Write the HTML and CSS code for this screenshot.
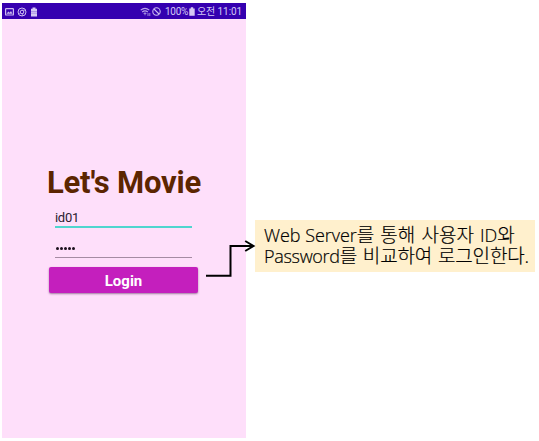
FILE: index.html
```html
<!DOCTYPE html>
<html lang="ko">
<head>
<meta charset="utf-8">
<title>Let's Movie</title>
<link rel="stylesheet" href="styles.css">
</head>
<body>
<main class="board">
  <section class="phone">
    <header class="status">
      <div class="status-left">
        <svg width="9" height="8" viewBox="0 0 9 8"><rect x=".6" y=".6" width="7.8" height="6.4" rx=".6" fill="none" stroke="#cbbcf0" stroke-width="1.2"/><path d="M1.5 5.8 3.4 3.6 4.6 4.8 6 3 7.5 5.8Z" fill="#cbbcf0"/></svg>
        <svg width="10" height="10" viewBox="0 0 10 10" fill="none" stroke="#cbbcf0"><circle cx="5" cy="5" r="4" stroke-width="1"/><circle cx="5" cy="5" r="1.8" stroke-width="1"/><path d="M5 3.2H8.3M3.5 6 1.8 7.2M6 6.5 5 9" stroke-width=".7"/></svg>
        <svg width="8" height="10" viewBox="0 0 8 10"><path d="M2.5.5h3v1.2H7v7.8H1V1.700h1.500z" fill="#d5c9f3"/><path d="M1 4.500h6M1 6.200h6" stroke="#9a80dc" stroke-width=".7"/></svg>
      </div>
      <div class="status-right">
        <svg width="11" height="10" viewBox="0 0 11 10" fill="none" stroke="#b9a5ea"><path d="M.7 3.200Q5-.5 9.300 3.200M2.200 5Q5 2.700 7.800 5M3.700 6.600Q5 5.500 6.300 6.600" stroke-width="1.100"/><path d="M5 8.300V6.500M8 6v3M9.800 6v3" stroke-width=".8"/></svg>
        <svg width="9" height="9" viewBox="0 0 9 9" fill="none" stroke="#cbbcf0" stroke-width="1.100"><circle cx="4.500" cy="4.500" r="3.700"/><path d="m2 2 5 5"/></svg>
        <span class="percent">100%</span>
        <svg width="6" height="9" viewBox="0 0 6 9"><path d="M1.800.3h2.400v1.100H5.700v7.300H.3V1.400h1.500z" fill="#d5c9f3"/></svg>
        <span class="clock">오전 11:01</span>
      </div>
    </header>
    <div class="login">
      <h1 class="title">Let's Movie</h1>
      <div class="field field-id">id01</div>
      <div class="field field-password"><i></i><i></i><i></i><i></i><i></i></div>
      <button class="submit" type="button">Login</button>
    </div>
  </section>
  <aside class="note">
    <div class="line line-one">Web Server<span>를 통해 사용자 </span>ID<span>와</span></div>
    <div class="line line-two">Password<span>를 비교하여 로그인한다.</span></div>
  </aside>
  <svg class="connector" width="56" height="42" viewBox="0 0 56 42" fill="none" stroke="#000" stroke-width="2"><path d="M6 40.700H30.500V11H53"/><path d="M45.200 6 53.500 11 45.200 16"/></svg>
</main>
</body>
</html>
```
FILE: styles.css
```css
* { box-sizing: border-box; }
body { margin: 0; background: #fff; }
.board {
  position: relative;
  display: flex;
  align-items: flex-start;
  gap: 9px;
  width: 539px;
  height: 441px;
  padding: 3px 0 0 2px;
  overflow: hidden;
}
.phone {
  width: 244px;
  height: 435px;
  background: #fedffa;
  font-family: Roboto, "Noto Sans CJK KR", sans-serif;
}
.status {
  display: flex;
  justify-content: space-between;
  align-items: center;
  height: 16px;
  padding: 1px 4px 0 3px;
  background: #3500b0;
  color: #d3c8f4;
  font-size: 10px;
  line-height: 15px;
}
.status-left, .status-right { display: flex; align-items: center; }
.status-left { gap: 3px; }
.status-right { gap: 1px; }
.status svg { display: block; }
.percent { margin: 0 0 0 3px; letter-spacing: -.3px; }
.clock { margin-left: 1px; white-space: nowrap; letter-spacing: -.1px; }
.login { padding: 144px 48px 0 47px; }
.title {
  margin: 0 -10px 0 -2px;
  height: 40px;
  color: #5c2500;
  font-size: 31px;
  font-weight: 700;
  letter-spacing: -.2px;
  line-height: 40px;
  white-space: nowrap;
}
.field {
  width: 137px;
  margin-left: 6px;
  color: #2b2030;
  font-size: 13px;
}
.field-id {
  height: 25px;
  padding-top: 6px;
  border-bottom: 2px solid #4fd5ce;
  letter-spacing: -.3px;
  line-height: 17px;
}
.field-password {
  display: flex;
  align-items: flex-start;
  gap: 1px;
  height: 30px;
  padding: 19px 0 0 1px;
  border-bottom: 1px solid #a58ba3;
}
.field-password i { width: 3px; height: 3px; border-radius: 50%; background: #1b101c; }
.submit {
  display: block;
  width: 149px;
  height: 26px;
  margin: 9px 0 0;
  padding: 2px 0 0;
  border: 0;
  border-radius: 2px;
  background: #c41fbd;
  box-shadow: 0 1px 2px rgba(70, 20, 70, .5);
  color: #fff;
  font: 700 15px/24px Roboto, sans-serif;
}
.note {
  width: 280px;
  height: 52px;
  margin-top: 217px;
  padding: 5px 0 0 9px;
  background: #fff0cd;
  color: #000;
  font: 300 18px/21px "Open Sans", "Noto Sans CJK KR", sans-serif;
  -webkit-text-stroke: .2px #000;
  white-space: nowrap;
}
.line { height: 21px; }
.line span { font-size: 19px; line-height: 20px; }
.line-one { letter-spacing: -.05px; }
.line-one span { letter-spacing: 0; word-spacing: 1.2px; }
.line-two { letter-spacing: -.3px; }
.line-two span { letter-spacing: -.15px; word-spacing: 1px; }
.connector { position: absolute; left: 200px; top: 235px; }
```
